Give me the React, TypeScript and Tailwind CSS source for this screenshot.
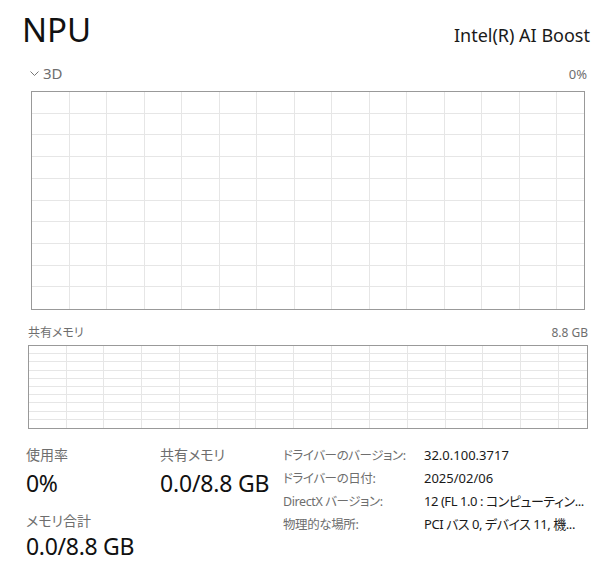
import React from "react";

const FONT = "font-['Noto_Sans','Noto_Sans_CJK_JP',sans-serif] [font-feature-settings:'palt']";

function Grid({ w, h, cols, rows, x0, dx }: { w: number; h: number; cols: number; rows: number; x0: number; dx: number }) {
  const vs: number[] = [];
  for (let k = 0; k < cols; k++) vs.push(Math.floor(x0 + dx * k) + 0.5);
  const hs: number[] = [];
  const dy = h / rows;
  for (let k = 1; k < rows; k++) hs.push(Math.floor(dy * k - 0.5) + 0.5);
  return (
    <svg width={w} height={h} className="block">
      {vs.map((x) => (
        <line key={"v" + x} x1={x} x2={x} y1={0} y2={h} stroke="#e6e6e6" strokeWidth={1} />
      ))}
      {hs.map((y) => (
        <line key={"h" + y} x1={0} x2={w} y1={y} y2={y} stroke="#e6e6e6" strokeWidth={1} />
      ))}
    </svg>
  );
}

export default function App() {
  const rows: [string, string, boolean][] = [
    ["ドライバーのバージョン:", "32.0.100.3717", false],
    ["ドライバーの日付:", "2025/02/06", false],
    ["DirectX バージョン:", "12 (FL 1.0 : コンピューティン...", true],
    ["物理的な場所:", "PCI バス 0, デバイス 11, 機...", true],
  ];
  return (
    <div className={`w-[600px] h-[574px] bg-white overflow-hidden flex flex-col ${FONT}`}>
      {/* header */}
      <div className="flex items-baseline justify-between pl-[22px] pr-[10px] pt-[13px]">
        <div className="text-[33px] leading-none text-[#111]">NPU</div>
        <div className="text-[18px] leading-none text-[#1a1a1a]">Intel(R) AI Boost</div>
      </div>

      {/* 3D graph */}
      <div className="ml-[30px] w-[557px] mt-[20px] flex items-baseline justify-between">
        <div className="flex items-baseline gap-[4px]">
          <svg width="9" height="6" viewBox="0 0 9 6" className="self-center">
            <polyline points="0.5,0.5 4.5,4.5 8.5,0.5" fill="none" stroke="#777" strokeWidth="1" />
          </svg>
          <span className="text-[15px] leading-none text-[#6e6e6e]">3D</span>
        </div>
        <span className="text-[13px] leading-none text-[#6e6e6e]">0%</span>
      </div>
      <div className="ml-[31px] mt-[10px] w-[554px] h-[219px] border border-[#999]">
        <Grid w={552} h={217} cols={14} rows={10} x0={37} dx={37.5} />
      </div>

      {/* shared memory graph */}
      <div className="ml-[28px] w-[560px] mt-[17px] flex items-baseline justify-between">
        <span className="text-[12px] leading-none text-[#6e6e6e]">共有メモリ</span>
        <span className="text-[12px] leading-none text-[#6e6e6e]">8.8 GB</span>
      </div>
      <div className="ml-[28px] mt-[6px] w-[560px] h-[84px] border border-[#999]">
        <Grid w={558} h={82} cols={14} rows={10} x0={37} dx={37.9} />
      </div>

      {/* bottom stats */}
      <div className="flex pl-[26px]">
        <div className="w-[134px] flex flex-col pt-[19px]">
          <span className="text-[14px] leading-none text-[#6e6e6e]">使用率</span>
          <span className="mt-[10px] text-[23px] leading-none text-[#111] tracking-[-0.3px]">0%</span>
          <span className="mt-[19px] text-[14px] leading-none text-[#6e6e6e]">メモリ合計</span>
          <span className="mt-[7px] text-[23px] leading-none text-[#111] tracking-[-0.3px]">0.0/8.8 GB</span>
        </div>
        <div className="w-[123px] flex flex-col pt-[19px]">
          <span className="text-[14px] leading-none text-[#6e6e6e]">共有メモリ</span>
          <span className="mt-[10px] text-[23px] leading-none text-[#111] tracking-[-0.2px]">0.0/8.8 GB</span>
        </div>
        <div className="flex flex-col pt-[15px]">
          {rows.map(([k, v, cjk]) => (
            <div key={k} className="flex h-[23px] items-center leading-[23px] whitespace-nowrap">
              <span className="w-[141px] text-[12.5px] tracking-[-0.4px] text-[#6e6e6e]">{k}</span>
              <span className={`text-[13px] text-[#1a1a1a] ${cjk ? "tracking-[-0.45px]" : ""}`}>{v}</span>
            </div>
          ))}
        </div>
      </div>
    </div>
  );
}
